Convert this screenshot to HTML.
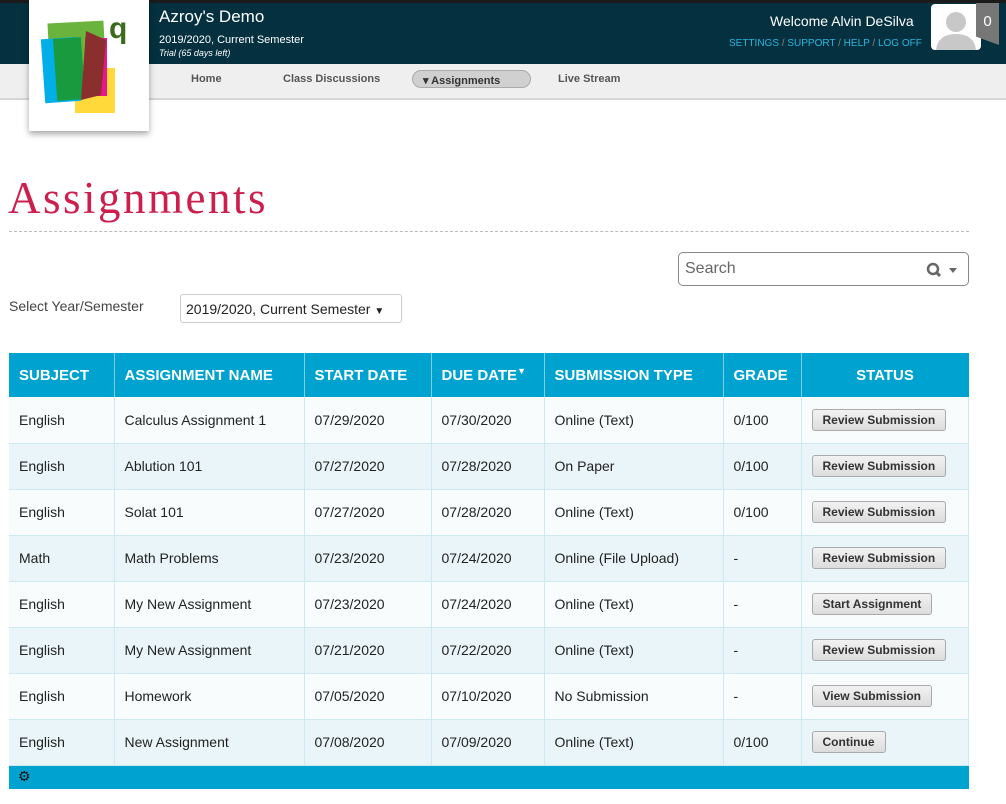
<!DOCTYPE html>
<html><head><style>
*{margin:0;padding:0;box-sizing:border-box}
body{width:1006px;height:804px;background:#fff;font-family:"Liberation Sans",sans-serif;position:relative;overflow:hidden;color:#222}
.top{position:absolute;left:0;top:0;width:1006px;height:64px;background:#04303f;border-top:3px solid #1a1a1a}
.nav{position:absolute;left:0;top:64px;width:1006px;height:36px;background:#efefef;border-bottom:2px solid #d6d6d6}
.nav span{position:absolute;top:9px;font-size:11px;font-weight:bold;color:#555}
.logo{position:absolute;left:29px;top:0;width:120px;height:131px;background:#fff;box-shadow:0 3px 6px rgba(0,0,0,.35)}
.abs{position:absolute}
table{position:absolute;left:9px;top:353px;border-collapse:collapse;width:960px;font-size:14px}
th{background:#00a2cf;color:#fff;height:44px;text-align:left;padding-left:10px;font-size:15px;border-right:1px solid #7fd0e7}
td{height:46px;padding-left:10px;border-right:1px solid #cde9f1;border-bottom:1px solid #cde9f1}
tr.a td{background:#f8fcfd}tr.b td{background:#e9f5f8}
.btn{display:inline-block;border:1px solid #aaa;border-radius:3px;background:linear-gradient(#f2f2f2,#dcdcdc);font-size:12px;font-weight:bold;color:#333;padding:3px 10px}
</style></head><body>
<div class="top"></div>
<div class="nav">
<span style="left:191px">Home</span><span style="left:283px">Class Discussions</span>
<span style="left:412px;top:6px;width:119px;height:18px;background:#d0d0d0;border:1px solid #aaa;border-radius:9px;padding:3px 0 0 10px;color:#333">▾ Assignments</span>
<span style="left:558px">Live Stream</span>
</div>
<div class="logo">
<svg width="120" height="131" viewBox="0 0 120 131">
<rect x="20" y="22" width="56" height="58" fill="#6ab43e" transform="rotate(-3 49 52)"/>
<rect x="46" y="68" width="40" height="45" fill="#ffd83a"/>
<rect x="14" y="38" width="36" height="64" fill="#00aee8" transform="rotate(-4 33 70)"/>
<rect x="56" y="38" width="22" height="58" fill="#e8168c"/>
<rect x="26" y="38" width="28" height="62" fill="#1a9a3e" transform="rotate(-4 40 68)"/>
<polygon points="57,31 77,40 72,95 52,100" fill="#8b2e2e"/>
<text x="80" y="38" font-size="30" font-weight="bold" fill="#3c6b1e" font-family="Liberation Sans">q</text>
</svg>
</div>
<div class="abs" style="left:159px;top:7px;color:#fff;font-size:17px">Azroy's Demo</div>
<div class="abs" style="left:159px;top:34px;color:#fff;font-size:11px">2019/2020, Current Semester</div>
<div class="abs" style="left:159px;top:48px;color:#fff;font-size:9px;font-style:italic">Trial (65 days left)</div>
<div class="abs" style="left:770px;top:13px;color:#fff;font-size:14px">Welcome Alvin DeSilva</div>
<div class="abs" style="left:729px;top:38px;color:#2ab6df;font-size:10px;white-space:nowrap">SETTINGS <span style="color:#888">/</span> SUPPORT <span style="color:#888">/</span> HELP <span style="color:#888">/</span> LOG OFF</div>
<div class="abs" style="left:931px;top:4px;width:50px;height:46px;background:#fff;border-radius:4px;overflow:hidden">
<svg width="50" height="46"><circle cx="25" cy="18" r="10" fill="#c8c8c8"/><path d="M5 46 Q7 30 25 30 Q43 30 45 46Z" fill="#c8c8c8"/></svg></div>
<div class="abs" style="left:976px;top:3px;width:23px;height:42px;background:#777;color:#fff;font-size:15px;text-align:center;padding-top:10px;clip-path:polygon(0 0,100% 0,100% 100%,0 80%)">0</div>
<div class="abs" style="left:8px;top:172px;font-family:'Liberation Serif',serif;font-size:45px;letter-spacing:2.5px;color:#cc1f4e">Assignments</div>
<div class="abs" style="left:9px;top:231px;width:960px;border-top:1px dashed #bbb"></div>
<div class="abs" style="left:678px;top:252px;width:291px;height:34px;border:1px solid #888;border-radius:5px;font-size:16px;color:#666;padding:7px 0 0 6px">Search
<svg style="position:absolute;right:8px;top:9px" width="34" height="16"><circle cx="7" cy="7" r="5" fill="none" stroke="#666" stroke-width="2.5"/><line x1="10" y1="10" x2="14" y2="14" stroke="#666" stroke-width="3"/><path d="M23 6 L31 6 L27 11Z" fill="#666"/></svg></div>
<div class="abs" style="left:9px;top:298px;font-size:14px;color:#444">Select Year/Semester</div>
<div class="abs" style="left:180px;top:294px;width:222px;height:29px;border:1px solid #ccc;border-radius:3px;font-size:14px;padding:6px 0 0 5px">2019/2020, Current Semester <span style="font-size:10px">▼</span></div>
<table>
<tr><th style="width:105px">SUBJECT</th><th style="width:190px">ASSIGNMENT NAME</th><th style="width:127px">START DATE</th><th style="width:113px">DUE DATE<sup style="font-size:9px">▼</sup></th><th style="width:179px">SUBMISSION TYPE</th><th style="width:78px">GRADE</th><th style="text-align:center;padding:0;border-right:none">STATUS</th></tr>
<tr class="a"><td>English</td><td>Calculus Assignment 1</td><td>07/29/2020</td><td>07/30/2020</td><td>Online (Text)</td><td>0/100</td><td><span class="btn">Review Submission</span></td></tr>
<tr class="b"><td>English</td><td>Ablution 101</td><td>07/27/2020</td><td>07/28/2020</td><td>On Paper</td><td>0/100</td><td><span class="btn">Review Submission</span></td></tr>
<tr class="a"><td>English</td><td>Solat 101</td><td>07/27/2020</td><td>07/28/2020</td><td>Online (Text)</td><td>0/100</td><td><span class="btn">Review Submission</span></td></tr>
<tr class="b"><td>Math</td><td>Math Problems</td><td>07/23/2020</td><td>07/24/2020</td><td>Online (File Upload)</td><td>-</td><td><span class="btn">Review Submission</span></td></tr>
<tr class="a"><td>English</td><td>My New Assignment</td><td>07/23/2020</td><td>07/24/2020</td><td>Online (Text)</td><td>-</td><td><span class="btn">Start Assignment</span></td></tr>
<tr class="b"><td>English</td><td>My New Assignment</td><td>07/21/2020</td><td>07/22/2020</td><td>Online (Text)</td><td>-</td><td><span class="btn">Review Submission</span></td></tr>
<tr class="a"><td>English</td><td>Homework</td><td>07/05/2020</td><td>07/10/2020</td><td>No Submission</td><td>-</td><td><span class="btn">View Submission</span></td></tr>
<tr class="b"><td>English</td><td>New Assignment</td><td>07/08/2020</td><td>07/09/2020</td><td>Online (Text)</td><td>0/100</td><td><span class="btn">Continue</span></td></tr>
</table>
<div class="abs" style="left:9px;top:766px;width:960px;height:23px;background:#00a2cf;font-size:14px;padding:2px 0 0 9px;color:#111">⚙</div>
</body></html>
